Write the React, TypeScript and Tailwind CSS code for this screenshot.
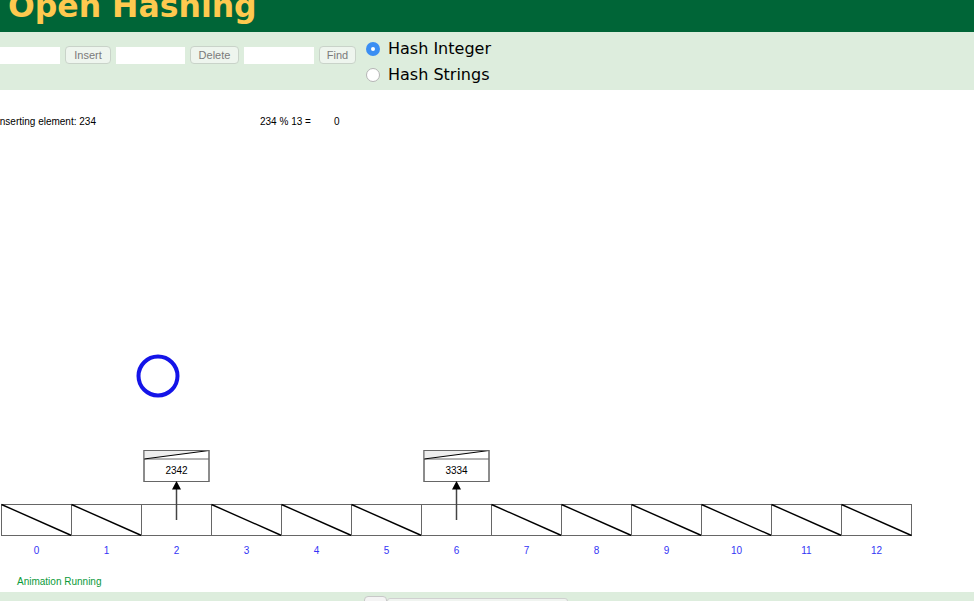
const CELL_W = 70;
const ARRAY_X = 1.5;
const ARRAY_Y = 414; // canvas coords (page y - 90)
const CELL_H = 31;

const nodes: { index: number; value: string }[] = [
  { index: 2, value: "2342" },
  { index: 6, value: "3334" },
];

function Radio({ checked, label }: { checked: boolean; label: string }) {
  return (
    <label className="flex items-center h-[26px] gap-[8px]">
      {checked ? (
        <span className="w-[14px] h-[14px] rounded-full bg-[#3b8ef3] flex items-center justify-center">
          <span className="w-[4px] h-[4px] rounded-full bg-white" />
        </span>
      ) : (
        <span className="w-[14px] h-[14px] rounded-full bg-white border border-[#b5b5b5]" />
      )}
      <span className="text-[16px] text-black" style={{ fontFamily: '"DejaVu Sans", sans-serif' }}>
        {label}
      </span>
    </label>
  );
}

function Btn({ children, w }: { children: string; w: string }) {
  return (
    <button
      className={`${w} h-[18px] rounded-[4px] border border-[#c9d3c9] bg-[#eef5ee] text-[11px] text-[#7a7a7a] leading-none`}
      style={{ fontFamily: '"Liberation Sans", Arial, sans-serif' }}
    >
      {children}
    </button>
  );
}

function Canvas() {
  const font = '"Liberation Sans", Arial, sans-serif';
  return (
    <svg width="974" height="502" className="block" style={{ fontFamily: font }}>
      <text x="-3" y="35" fontSize="10" fill="#000">Inserting element: 234</text>
      <text x="260" y="35" fontSize="10" fill="#000">234 % 13 =</text>
      <text x="334" y="35" fontSize="10" fill="#000">0</text>

      <circle cx="158" cy="286" r="19.5" fill="none" stroke="#1414e8" strokeWidth="4" />

      {Array.from({ length: 13 }, (_, i) => {
        const x = ARRAY_X + i * CELL_W;
        const hasNode = nodes.some((n) => n.index === i);
        return (
          <g key={i}>
            <rect x={x} y={ARRAY_Y + 0.5} width={CELL_W} height={CELL_H} fill="#fff" stroke="#666" strokeWidth="1" />
            {!hasNode && (
              <line x1={x} y1={ARRAY_Y + 0.5} x2={x + CELL_W} y2={ARRAY_Y + CELL_H + 0.5} stroke="#000" strokeWidth="1.4" />
            )}
            <text x={x + CELL_W / 2} y={ARRAY_Y + 50} fontSize="10" fill="#3434f5" textAnchor="middle">
              {i}
            </text>
          </g>
        );
      })}

      {nodes.map((n) => {
        const cx = ARRAY_X + n.index * CELL_W + CELL_W / 2;
        const left = cx - 32.5;
        return (
          <g key={n.index}>
            <rect x={left} y={360.5} width={65} height={31} fill="#fff" stroke="#666" strokeWidth="1" />
            <line x1={left} y1={369} x2={left + 65} y2={369} stroke="#666" strokeWidth="1" />
            <polygon points={`${left},369 ${left + 65},360.5 ${left},360.5`} fill="#eee" />
            <line x1={left} y1={369} x2={left + 65} y2={360.5} stroke="#000" strokeWidth="1" />
            <rect x={left} y={360.5} width={65} height={31} fill="none" stroke="#666" strokeWidth="1" />
            <text x={cx} y={384} fontSize="10" fill="#000" textAnchor="middle">
              {n.value}
            </text>
            <line x1={cx} y1={430} x2={cx} y2={398} stroke="#444" strokeWidth="1.5" />
            <polygon points={`${cx},391 ${cx - 4.5},399.5 ${cx + 4.5},399.5`} fill="#000" />
          </g>
        );
      })}

      <text x="17" y="494.5" fontSize="10" fill="#0a9a3a">Animation Running</text>
    </svg>
  );
}

export default function App() {
  return (
    <div className="w-[974px] h-[601px] overflow-hidden bg-white">
      <div className="h-[32px] bg-[#006537] overflow-hidden pl-[8px]">
        <h1
          className="text-[31.5px] font-bold leading-none text-[#fec94f] mt-[-9px] whitespace-nowrap"
          style={{ fontFamily: '"DejaVu Sans", Verdana, sans-serif' }}
        >
          Open Hashing
        </h1>
      </div>

      <div className="h-[58px] bg-[#ddeddd] flex items-start">
        <div className="flex items-center gap-[5px] mt-[14px]">
          <input className="w-[60px] h-[17px] bg-white outline-none" />
          <Btn w="w-[46px]">Insert</Btn>
          <input className="w-[69px] h-[17px] bg-white outline-none" />
          <Btn w="w-[49px]">Delete</Btn>
          <input className="w-[70px] h-[17px] bg-white outline-none" />
          <Btn w="w-[37px]">Find</Btn>
        </div>
        <div className="flex flex-col ml-[10px] mt-[4px]">
          <Radio checked label="Hash Integer" />
          <Radio checked={false} label="Hash Strings" />
        </div>
      </div>

      <Canvas />

      <div className="h-[40px] bg-[#ddeddd] flex items-start pl-[364px] pt-[4px]">
        <div className="w-[23px] h-[20px] rounded-[4px] border border-[#c8c8c8] bg-[#f4f4f4]" />
        <div className="w-[181px] h-[20px] mt-[2px] rounded-[3px] border border-[#d0d0d0] bg-[#f0f4f0]" />
      </div>
    </div>
  );
}
